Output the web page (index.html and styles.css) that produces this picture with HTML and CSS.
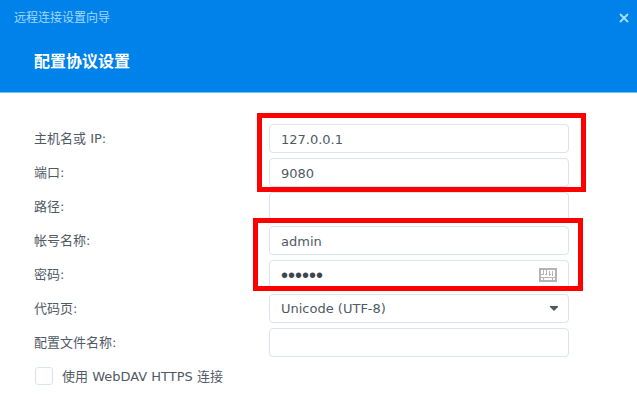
FILE: index.html
```html
<!DOCTYPE html>
<html lang="zh-CN">
<head>
<meta charset="utf-8">
<title>远程连接设置向导</title>
<link rel="stylesheet" href="styles.css">
</head>
<body>
<header class="header">
  <div class="titlebar">
    <span class="window-title">远程连接设置向导</span>
    <button class="close" type="button" aria-label="关闭">
      <svg width="10" height="10" viewBox="0 0 10 10"><path d="M1 1l8 8M9 1l-8 8"/></svg>
    </button>
  </div>
  <h1 class="heading">配置协议设置</h1>
</header>
<form class="form">
  <div class="group group-host">
    <div class="row"><label for="host">主机名或 IP:</label><input class="field" id="host" type="text" value="127.0.0.1"></div>
    <div class="row"><label for="port">端口:</label><input class="field" id="port" type="text" value="9080"></div>
  </div>
  <div class="row"><label for="path">路径:</label><input class="field" id="path" type="text"></div>
  <div class="group group-account">
    <div class="row"><label for="account">帐号名称:</label><input class="field" id="account" type="text" value="admin"></div>
    <div class="row">
      <label for="password">密码:</label>
      <div class="control">
        <input class="field password" id="password" type="password" value="secret">
        <svg class="keyboard" width="18" height="14" viewBox="0 0 18 14"><path class="case" d="M1 1h16v12H1z"/><path class="keys" d="M4.500 2v4M7.500 2v4M10.500 3v5M13.500 3v5M2 6.500h3M6 6.500h2M10 6.500h2M2 9.500h14M4.500 9v3M13.500 9v3"/></svg>
      </div>
    </div>
  </div>
  <div class="row">
    <label for="codepage">代码页:</label>
    <div class="control">
      <select class="field" id="codepage"><option>Unicode (UTF-8)</option></select>
      <svg class="arrow" width="8" height="5" viewBox="0 0 8 5"><path d="M0 0h8v1L4 5 0 1z"/></svg>
    </div>
  </div>
  <div class="row"><label for="profile">配置文件名称:</label><input class="field" id="profile" type="text"></div>
  <label class="check"><input type="checkbox"><span>使用 WebDAV HTTPS 连接</span></label>
</form>
</body>
</html>
```
FILE: styles.css
```css
* { box-sizing: border-box; }

body {
  margin: 0;
  background: #fff;
  color: #505a64;
  font: 13px/20px "DejaVu Sans", "Noto Sans CJK SC", sans-serif;
}

.header {
  padding-bottom: 18px;
  background: #0082eb;
  border-bottom: 1px solid #70c4fa;
}

.titlebar {
  display: flex;
  justify-content: space-between;
  align-items: center;
  height: 36px;
  padding: 0 8px 0 14px;
}

.window-title {
  color: #a4d8ff;
  font-size: 12px;
}

.close {
  display: flex;
  padding: 0;
  border: 0;
  background: none;
}

.close path {
  fill: none;
  stroke: #a0e0ff;
  stroke-width: 2;
}

.heading {
  margin: 14px 34px 0;
  color: #fff;
  font-size: 16px;
  font-weight: 700;
  line-height: 24px;
}

.form {
  display: flex;
  flex-direction: column;
  gap: 6px;
  padding: 31px 68px 0 34px;
}

.group {
  position: relative;
  display: flex;
  flex-direction: column;
  gap: 6px;
}

/* Red frames that call out the fields to fill in */
.group::after {
  position: absolute;
  border: 5px solid #f00;
  content: "";
  pointer-events: none;
  z-index: 1;
}

.group-host::after { inset: -11px -17px -6px 223px; }
.group-account::after { inset: -8px -14px -3px 219px; }

.row {
  display: grid;
  grid-template-columns: 235px minmax(0, 1fr);
  align-items: center;
}

.row label,
.check span { padding-top: 2px; }

.control { position: relative; }

.field {
  display: block;
  width: 100%;
  height: 29px;
  margin-bottom: -1px;
  padding: 1px 11px 0;
  border: 1px solid #d9e4ec;
  border-radius: 4px;
  outline: 0;
  background: #fff;
  color: #505a64;
  font: inherit;
  appearance: none;
}

.password {
  padding-right: 36px;
  font-family: "Liberation Sans", sans-serif;
  font-size: 20px;
  color: #3c4650;
}

.keyboard {
  position: absolute;
  top: 8px;
  right: 12px;
}

.keyboard path { fill: none; stroke: #b4b4b4; }
.keyboard .case { stroke-width: 2; }
.keyboard .keys { stroke-width: 1; }

.arrow {
  position: absolute;
  top: 12px;
  right: 11px;
  fill: #505a64;
  pointer-events: none;
}

.check {
  display: flex;
  align-items: center;
  gap: 9px;
  height: 28px;
}

.check input {
  width: 18px;
  height: 18px;
  margin: 0 0 0 1px;
  border: 1px solid #d9e4ec;
  border-radius: 3px;
  background: #fff;
  appearance: none;
}

.check input:checked { background: #0082eb; }
```
